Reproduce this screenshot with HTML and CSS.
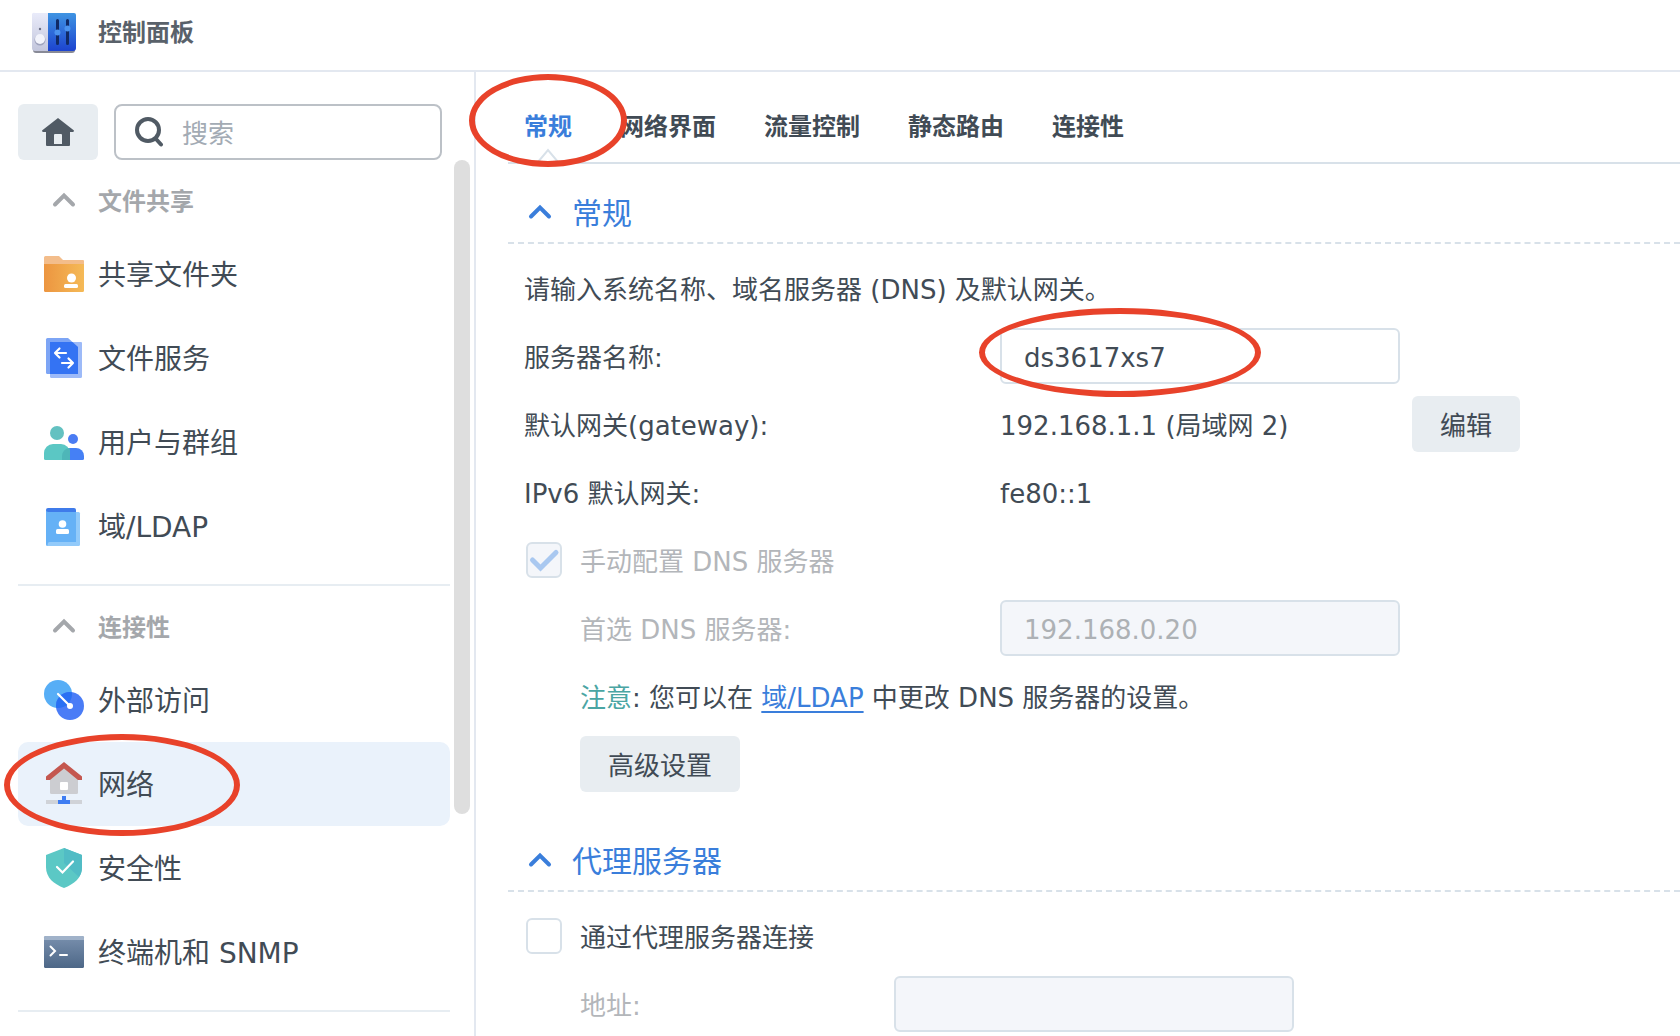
FILE: index.html
```html
<!DOCTYPE html>
<html lang="zh-CN">
<head>
<meta charset="utf-8">
<meta name="viewport" content="width=device-width, initial-scale=1">
<title>控制面板</title>
<link rel="stylesheet" href="styles.css">
</head>
<body>
<div class="window">
  <header class="titlebar">
    <svg class="titlebar-icon" width="44" height="42" viewBox="0 0 44 42" aria-hidden="true">
      <defs>
        <linearGradient id="panelBlue" x1="0" y1="0" x2="0" y2="1"><stop offset="0" stop-color="#3f94e2"/><stop offset="1" stop-color="#1c43cf"/></linearGradient>
        <linearGradient id="panelGrey" x1="0" y1="0" x2="0" y2="1"><stop offset="0" stop-color="#e9ebfa"/><stop offset="1" stop-color="#c3c6dc"/></linearGradient>
      </defs>
      <rect x="1" y="4" width="42" height="37" rx="3" fill="#55586a" opacity=".7"/>
      <path d="M3 1h13v38H3a3 3 0 0 1-3-3V3a2 2 0 0 1 3-2z" fill="url(#panelGrey)"/>
      <path d="M16 1h26a2 2 0 0 1 2 2v33a3 3 0 0 1-3 3H16z" fill="url(#panelBlue)"/>
      <path d="M25.500 8.500v23M35.500 8.500v23" stroke="#102a66" stroke-width="3" stroke-linecap="round"/>
      <circle cx="25.500" cy="20.500" r="3" fill="#4b93ee"/><circle cx="35.500" cy="16.500" r="3" fill="#4b93ee"/>
      <circle cx="8" cy="28" r="5.500" fill="#9fa3bd"/><circle cx="8" cy="27" r="5" fill="#f2f3fb"/>
      <circle cx="8" cy="17" r="1.200" fill="#6a6f86"/>
    </svg>
    <h1 class="titlebar-title">控制面板</h1>
  </header>

  <div class="body">
    <aside class="sidebar">
      <div class="tools">
        <button class="home" type="button" aria-label="主页">
          <svg width="32" height="28" viewBox="0 0 32 28" aria-hidden="true"><path fill-rule="evenodd" fill="#505a64" d="M16 0l16 12.500-.6 1.500H28v13a1 1 0 0 1-1 1H5a1 1 0 0 1-1-1V14H.6L0 12.500zM12 17v9h8v-9a1 1 0 0 0-1-1h-6a1 1 0 0 0-1 1z"/></svg>
        </button>
        <label class="search">
          <svg width="30" height="30" viewBox="0 0 30 30" fill="none" stroke="#505a64" stroke-width="4" stroke-linecap="round" aria-hidden="true"><circle cx="14" cy="13" r="11"/><path d="M22 22l5 5.500"/></svg>
          <input class="search-input" type="search" placeholder="搜索" aria-label="搜索">
        </label>
      </div>

      <div class="nav-area">
        <nav class="nav">
          <h2 class="group"><svg class="chevron" width="24" height="16" viewBox="0 0 24 16" aria-hidden="true"><path d="M3 12.500l9-9 9 9"/></svg><span class="caption">文件共享</span></h2>
          <ul class="items">
            <li><a class="item" href="#share">
              <svg width="48" height="48" viewBox="0 0 48 48" aria-hidden="true">
                <defs><linearGradient id="folder"><stop offset="0" stop-color="#ec9540"/><stop offset="1" stop-color="#f5ba57"/></linearGradient></defs>
                <path d="M5.500 6H19l4 4h20a1 1 0 0 1 1 1v4H4V7.500A1.500 1.500 0 0 1 5.500 6z" fill="#f3bd8b"/>
                <path d="M4 14h40v26.500a1.500 1.500 0 0 1-1.500 1.500h-37A1.500 1.500 0 0 1 4 40.500z" fill="url(#folder)"/>
                <circle cx="31.500" cy="28" r="4.500" fill="#fff"/><rect x="24" y="34" width="14" height="4" rx="1.500" fill="#fff"/>
              </svg><span class="caption">共享文件夹</span></a></li>
            <li><a class="item" href="#service">
              <svg width="48" height="48" viewBox="0 0 48 48" aria-hidden="true">
                <path d="M10 8h31a1 1 0 0 1 1 1v33.500a1.500 1.500 0 0 1-1.500 1.500h-29a1.500 1.500 0 0 1-1.500-1.500z" fill="#9dbaf8"/>
                <path d="M7.500 4H28l10 9v27H7.500A1.500 1.500 0 0 1 6 38.500v-33A1.500 1.500 0 0 1 7.500 4z" fill="#7da5f5"/>
                <path d="M10 8h22.400l5.600 5v27H10z" fill="#3473f3"/>
                <path d="M26 19H15m4.500-4.500L15 19l4.500 4.500M22 29h11m-4.500-4.500L33 29l-4.500 4.500" fill="none" stroke="#fff" stroke-width="2.200" stroke-linecap="round" stroke-linejoin="round"/>
              </svg><span class="caption">文件服务</span></a></li>
            <li><a class="item" href="#users">
              <svg width="48" height="48" viewBox="0 0 48 48" aria-hidden="true">
                <circle cx="33" cy="21" r="5" fill="#4a7cf3"/><path d="M22 42v-4a8 8 0 0 1 8-8h6a8 8 0 0 1 8 8v2.500a1.500 1.500 0 0 1-1.500 1.500z" fill="#4580f5"/>
                <circle cx="17" cy="15" r="7" fill="#63c1c1"/><path d="M5.500 42A1.500 1.500 0 0 1 4 40.500V35a9 9 0 0 1 9-9h8a9 9 0 0 1 9 9v7z" fill="#5bc7c4"/>
                <path d="M22 42v-4a8 8 0 0 1 7.500-8Q30 32 30 35v7z" fill="#4eb6b8"/>
              </svg><span class="caption">用户与群组</span></a></li>
            <li><a class="item" href="#ldap">
              <svg width="48" height="48" viewBox="0 0 48 48" aria-hidden="true">
                <rect x="6" y="6" width="30" height="10" rx="2" fill="#3f7bea"/>
                <path d="M8 10h30.500a1.500 1.500 0 0 1 1.500 1.500v31a1.500 1.500 0 0 1-1.500 1.500H8a2 2 0 0 1-2-2z" fill="#92cafa"/>
                <path d="M6 8q0 2 2.500 2H36v30H9.500q-2 0-2 4Q6 44 6 42z" fill="#65b1f6"/>
                <circle cx="22.500" cy="22" r="3.800" fill="#fff"/><rect x="16" y="27" width="13" height="5" rx="1.500" fill="#fff"/>
              </svg><span class="caption">域/LDAP</span></a></li>
          </ul>
          <hr class="divider">
          <h2 class="group"><svg class="chevron" width="24" height="16" viewBox="0 0 24 16" aria-hidden="true"><path d="M3 12.500l9-9 9 9"/></svg><span class="caption">连接性</span></h2>
          <ul class="items">
            <li><a class="item" href="#external">
              <svg width="48" height="48" viewBox="0 0 48 48" aria-hidden="true">
                <defs><clipPath id="lens"><circle cx="18" cy="18" r="14"/></clipPath></defs>
                <circle cx="18" cy="18" r="14" fill="#57aef6"/><circle cx="30" cy="30" r="14" fill="#4a7cf6"/>
                <circle cx="30" cy="30" r="14" fill="#2970f3" clip-path="url(#lens)"/>
                <path d="M18 18l12 12" stroke="#fff" stroke-width="2.200" stroke-linecap="round"/><circle cx="30" cy="30" r="3" fill="#fff"/>
              </svg><span class="caption">外部访问</span></a></li>
            <li class="marked"><a class="item item-active" href="#network" aria-current="page">
              <svg width="48" height="48" viewBox="0 0 48 48" aria-hidden="true">
                <path d="M24 7l14 11v14.500a1.500 1.500 0 0 1-1.500 1.500h-25a1.500 1.500 0 0 1-1.500-1.500V18z" fill="#cccdd1"/>
                <path d="M24 2l18 14.500V20h-4L24 8.500 10 20H6v-3.500z" fill="#c4574f"/>
                <rect x="20" y="22" width="8" height="8" rx="1" fill="#fff"/>
                <path d="M6 40h36v4H6z" fill="#d0d3d8"/><path d="M22 36h4v4h4v4H18v-4h4z" fill="#3f7df2"/>
              </svg><span class="caption">网络</span></a><span class="ring ring-nav" aria-hidden="true"></span></li>
            <li><a class="item" href="#security">
              <svg width="48" height="48" viewBox="0 0 48 48" aria-hidden="true">
                <path d="M24 4l18 7v12c0 11-8 17-18 21C14 40 6 34 6 23V11z" fill="#5bc8c5"/>
                <path d="M24 4l18 7v12q0 6-3 10L24 19z" fill="#51bcc5"/>
                <path d="M17 23l5.500 5.500L33 17.500" fill="none" stroke="#fff" stroke-width="2.200" stroke-linecap="round"/>
              </svg><span class="caption">安全性</span></a></li>
            <li><a class="item" href="#terminal">
              <svg width="48" height="48" viewBox="0 0 48 48" aria-hidden="true">
                <defs><linearGradient id="term" x1="0" y1="0" x2="0" y2="1"><stop offset="0" stop-color="#7990ae"/><stop offset="1" stop-color="#4d6787"/></linearGradient></defs>
                <rect x="4" y="8" width="40" height="32" rx="1.500" fill="url(#term)"/><path d="M5.500 8h37A1.500 1.500 0 0 1 44 9.500V12H4V9.500A1.500 1.500 0 0 1 5.500 8z" fill="#a0b2c9"/>
                <path d="M10.500 18.500L15 23l-4.500 4.500M20 27h7" fill="none" stroke="#fff" stroke-width="2" stroke-linecap="round"/>
              </svg><span class="caption">终端机和 SNMP</span></a></li>
          </ul>
          <hr class="divider">
        </nav>
        <div class="scroll-thumb"></div>
      </div>
    </aside>

    <main class="main">
      <nav class="tabs">
        <a class="tab tab-active" href="#general" aria-current="true">常规
          <svg class="tab-arrow" width="24" height="14" viewBox="0 0 24 14" aria-hidden="true"><path d="M2 14L12 2l10 12" fill="#fff" stroke="#d8e1e9" stroke-width="2"/></svg>
          <span class="ring ring-tab" aria-hidden="true"></span></a>
        <a class="tab" href="#interface">网络界面</a>
        <a class="tab" href="#traffic">流量控制</a>
        <a class="tab" href="#route">静态路由</a>
        <a class="tab" href="#connectivity">连接性</a>
      </nav>

      <section class="section">
        <h2 class="section-head"><svg class="chevron" width="24" height="16" viewBox="0 0 24 16" aria-hidden="true"><path d="M3 12.500l9-9 9 9"/></svg><span class="caption">常规</span></h2>
        <div class="rows">
          <p class="row"><span class="text">请输入系统名称、域名服务器 (DNS) 及默认网关。</span></p>
          <div class="row">
            <label class="label text" for="server-name">服务器名称:</label>
            <div class="marked">
              <input class="field" id="server-name" type="text" value="ds3617xs7">
              <span class="ring ring-field" aria-hidden="true"></span>
            </div>
          </div>
          <div class="row">
            <span class="label text">默认网关(gateway):</span>
            <span class="value text">192.168.1.1 (局域网 2)</span>
            <button class="btn text" type="button">编辑</button>
          </div>
          <div class="row">
            <span class="label text">IPv6 默认网关:</span>
            <span class="value text">fe80::1</span>
          </div>
          <label class="row check-row disabled">
            <span class="check"><input class="check-input" type="checkbox" checked disabled>
              <svg class="check-mark" width="36" height="36" viewBox="0 0 36 36" aria-hidden="true"><path d="M6.500 18l8 8L30 10.500" fill="none" stroke="#a9c8f0" stroke-width="5" stroke-linecap="round"/></svg></span>
            <span class="text">手动配置 DNS 服务器</span>
          </label>
          <div class="row disabled">
            <label class="label text indent" for="dns">首选 DNS 服务器:</label>
            <input class="field" id="dns" type="text" value="192.168.0.20" disabled>
          </div>
          <p class="row indent"><span class="text"><span class="note">注意</span>: 您可以在 <a class="link" href="#ldap">域/LDAP</a> 中更改 DNS 服务器的设置。</span></p>
          <div class="row indent"><button class="btn text" type="button">高级设置</button></div>
        </div>
      </section>

      <section class="section">
        <h2 class="section-head"><svg class="chevron" width="24" height="16" viewBox="0 0 24 16" aria-hidden="true"><path d="M3 12.500l9-9 9 9"/></svg><span class="caption">代理服务器</span></h2>
        <div class="rows rows-proxy">
          <label class="row check-row"><span class="check"><input class="check-input" type="checkbox"></span><span class="text">通过代理服务器连接</span></label>
          <div class="row disabled">
            <label class="label text indent" for="address">地址:</label>
            <input class="field" id="address" type="text" disabled>
          </div>
        </div>
      </section>
    </main>
  </div>
</div>
</body>
</html>
```
FILE: styles.css
```css
:root {
  --text: #414b55;
  --muted: #b3b6ba;
  --blue: #3a7edb;
  --line: #d8e1e9;
  --frame: #e3e8f0;
  --button: #e8edf1;
  --ring: #e8422a;
}

* {
  box-sizing: border-box;
}

body,
h1,
h2,
p,
ul {
  margin: 0;
  padding: 0;
}

body,
input,
button {
  font-family: "DejaVu Sans", "Noto Sans CJK SC", sans-serif;
  font-size: 26px;
  line-height: 36px;
  color: var(--text);
}

body {
  background: #fff;
}

svg {
  flex: none;
  display: block;
}

a {
  color: inherit;
  text-decoration: none;
}

.window {
  display: flex;
  flex-direction: column;
  height: 100vh;
  overflow: hidden;
}

/* Title bar */
.titlebar {
  flex: none;
  display: flex;
  align-items: center;
  gap: 22px;
  padding: 12px 32px 16px;
  border-bottom: 2px solid var(--frame);
}

.titlebar-title {
  font-size: 24px;
  line-height: 42px;
  color: #59616a;
}

.body {
  flex: 1;
  display: flex;
  min-height: 0;
}

/* Sidebar */
.sidebar {
  flex: none;
  width: 476px;
  padding: 32px 4px 0 18px;
  border-right: 2px solid var(--frame);
}

.tools {
  display: flex;
  gap: 16px;
  padding-right: 28px;
}

.home {
  display: flex;
  align-items: center;
  justify-content: center;
  width: 80px;
  height: 56px;
  border: 0;
  border-radius: 6px;
  background: var(--button);
}

.search {
  flex: 1;
  display: flex;
  align-items: center;
  gap: 18px;
  min-width: 0;
  height: 56px;
  padding: 0 18px;
  border: 2px solid #bcc1c7;
  border-radius: 8px;
}

.search-input {
  flex: 1;
  min-width: 0;
  padding: 4px 0 0;
  border: 0;
  outline: 0;
  background: none;
}

.search-input::placeholder {
  color: #a3abb4;
}

.nav-area {
  display: flex;
  align-items: flex-start;
  gap: 4px;
}

.nav {
  flex: 1;
}

.scroll-thumb {
  width: 16px;
  height: 654px;
  border-radius: 8px;
  background: #dedede;
}

.chevron {
  fill: none;
  stroke: currentColor;
  stroke-width: 4;
  stroke-linecap: round;
}

.caption {
  padding-top: 4px;
}

.text {
  padding-top: 3px;
}

.group {
  display: flex;
  align-items: center;
  gap: 22px;
  height: 72px;
  padding: 8px 0 0 34px;
  font-size: 24px;
  color: #a4a7ab;
}

.items {
  list-style: none;
}

.item {
  display: flex;
  align-items: center;
  gap: 10px;
  height: 84px;
  padding-left: 22px;
  border-radius: 10px;
  font-size: 28px;
}

.item-active {
  background: #eaf2fb;
}

.divider {
  height: 2px;
  margin: 16px 0 0;
  border: 0;
  background: #e7edf2;
}

/* Main pane */
.main {
  flex: 1;
  min-width: 0;
  padding-left: 32px;
}

.tabs {
  display: flex;
  gap: 48px;
  height: 92px;
  padding: 0 16px;
  border-bottom: 2px solid var(--line);
}

.tab {
  position: relative;
  padding-top: 37px;
  font-size: 24px;
  font-weight: 700;
}

.tab-active {
  color: var(--blue);
}

.tab-arrow {
  position: absolute;
  bottom: 0;
  left: 50%;
  margin-left: -12px;
}

.section {
  margin-bottom: 20px;
}

.section-head {
  display: flex;
  align-items: center;
  gap: 20px;
  height: 80px;
  padding: 18px 20px 0;
  border-bottom: 2px dashed var(--line);
  font-size: 30px;
  font-weight: 400;
  color: var(--blue);
}

.rows {
  display: flex;
  flex-direction: column;
  gap: 12px;
  padding: 16px 16px 0;
}

.row {
  display: flex;
  align-items: center;
  height: 56px;
}

.label {
  flex: none;
  width: 476px;
}

.rows-proxy .label {
  width: 370px;
}

.indent {
  padding-left: 56px;
}

.value {
  width: 412px;
}

.disabled {
  color: var(--muted);
}

.field {
  display: block;
  width: 400px;
  height: 56px;
  padding: 3px 22px 0;
  border: 2px solid var(--line);
  border-radius: 6px;
  outline: 0;
  background: #fff;
}

.field:disabled {
  background: #f4f6fa;
  color: #adb1b5;
}

.btn {
  height: 56px;
  padding: 3px 28px 0;
  border: 0;
  border-radius: 6px;
  background: var(--button);
}

.check-row {
  gap: 18px;
  padding-left: 2px;
}

.check {
  position: relative;
  width: 36px;
  height: 36px;
}

.check-input {
  appearance: none;
  display: block;
  width: 36px;
  height: 36px;
  margin: 0;
  border: 2px solid var(--line);
  border-radius: 6px;
  background: #fff;
}

.check-input:disabled {
  background: #f4f6fa;
}

.check-mark {
  position: absolute;
  inset: 0;
}

.note {
  color: #4aa5a3;
}

.link {
  color: var(--blue);
  text-decoration: underline 2px;
  text-underline-offset: 4px;
}

/* Red highlight rings */
.marked {
  position: relative;
}

.ring {
  position: absolute;
  z-index: 1;
  border: 6px solid var(--ring);
  border-radius: 50%;
  pointer-events: none;
}

.ring-nav {
  top: -8px;
  left: -14px;
  width: 236px;
  height: 102px;
}

.ring-tab {
  top: 2px;
  left: -55px;
  width: 158px;
  height: 93px;
}

.ring-field {
  top: -20px;
  left: -21px;
  width: 282px;
  height: 89px;
}
```
